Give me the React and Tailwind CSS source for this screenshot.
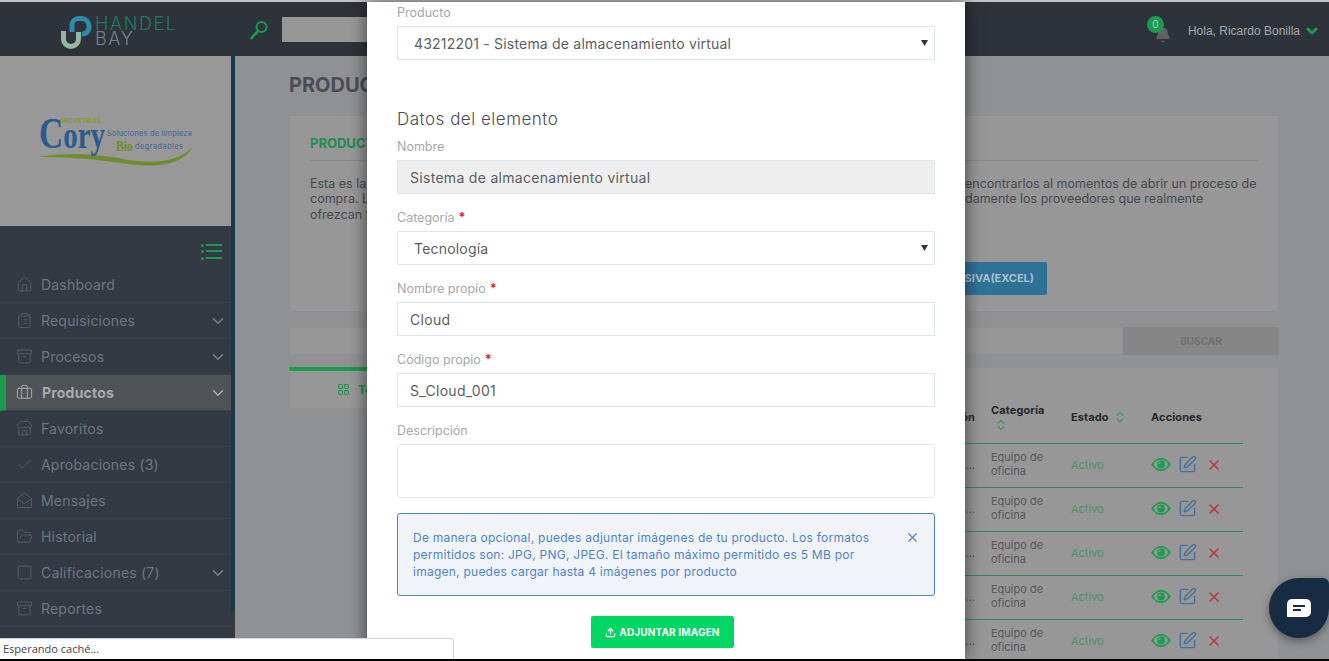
import React from 'react';
import { Home, ClipboardList, Archive, Briefcase, Store, Check, MailOpen, FolderOpen, Square, ChevronDown, ChevronsUpDown, LayoutGrid, SquarePen, X, Upload, Bell } from 'lucide-react';

const menu = [
  { label: 'Dashboard', icon: Home },
  { label: 'Requisiciones', icon: ClipboardList, arrow: true },
  { label: 'Procesos', icon: Archive, arrow: true },
  { label: 'Productos', icon: Briefcase, arrow: true, active: true },
  { label: 'Favoritos', icon: Store },
  { label: 'Aprobaciones (3)', icon: Check },
  { label: 'Mensajes', icon: MailOpen },
  { label: 'Historial', icon: FolderOpen },
  { label: 'Calificaciones (7)', icon: Square, arrow: true },
  { label: 'Reportes', icon: Archive },
];

const HandelLogo = () => (
  <svg width="118" height="44" viewBox="0 -4 118 44" className="mt-[10px] shrink-0">
    <path d="M3.5 15V23a7.5 7.5 0 0 0 15 0V16" fill="none" stroke="#93b7a5" strokeWidth="5" />
    <path d="M12 16V9a6.5 6.5 0 0 1 6.5-6.5h3a7.5 7.5 0 0 1 7.5 7.5a7 7 0 0 1-7 8" fill="none" stroke="#2b8ba8" strokeWidth="5" />
    <text x="35" y="14" fontSize="18" fontWeight="300" letterSpacing="1.6" fill="#1d7a63">HANDEL</text>
    <text x="35" y="29" fontSize="18" fontWeight="300" letterSpacing="1.6" fill="#7d8186">BAY</text>
  </svg>
);

const CoryLogo = () => (
  <svg width="157" height="60" viewBox="0 -10 157 60">
    <path d="M0 41Q40 34 90 44Q135 51 155 31Q140 55 90 48Q40 40 0 41" fill="#6d8c2c" />
    <text x="1" y="32" fontWeight="700" textLength="66" lengthAdjust="spacingAndGlyphs" fontFamily="Liberation Serif" fill="#2a5a8e">
      <tspan fontSize="44">C</tspan>
      <tspan fontSize="38">ory</tspan>
    </text>
    <text x="24" y="7" fontSize="5.5" fontWeight="700" letterSpacing="0.5" fill="#7d9a2e">INDUSTRIAS</text>
    <text x="69" y="20" fontSize="7.4" textLength="85" fill="#3f6492">Soluciones de limpieza</text>
    <text x="78" y="35" fontSize="14" fontWeight="700" textLength="17" lengthAdjust="spacingAndGlyphs" fontFamily="Liberation Serif" fill="#6d8c2c">Bio</text>
    <text x="97" y="33" fontSize="7.4" textLength="48" fill="#3f6492">degradables</text>
  </svg>
);

const Eye = () => (
  <svg width="20" height="15" viewBox="0 0 20 15">
    <path d="M0 7.5Q10 -6 20 7.5Q10 21 0 7.5Z" fill="#1f9d53" />
    <ellipse cx="10" cy="7.5" rx="7" ry="4.6" fill="#979797" />
    <circle cx="10" cy="7.5" r="3.9" fill="#1f9d53" />
    <circle cx="8.6" cy="6" r="1.1" fill="#979797" />
  </svg>
);

const Field = ({ label, required, children, className }) => (
  <div className={className}>
    <div className="h-[20px] text-[12.5px] leading-[20px] text-[#a5a8ad]">
      {label}
      {required && <span className="ml-1 font-bold text-[#ee1c25]">*</span>}
    </div>
    <div className="mt-[3px]">{children}</div>
  </div>
);

const Input = ({ children, muted }) => (
  <div className={`h-[34px] border border-[#dde6ee] px-3 text-[14px] leading-[34px] tracking-[0.3px] text-[#5a5e63] ${muted ? 'bg-[#eeeeee]' : 'bg-white'}`}>
    {children}
  </div>
);

const Select = ({ children }) => (
  <div className="flex h-[34px] items-center justify-between border border-[#dde6ee] bg-white pl-4 pr-[6px] text-[14px] tracking-[0.2px] text-[#5a5e63]">
    <span>{children}</span>
    <svg width="7" height="6" viewBox="0 0 7 6"><path d="M0 0h7L3.5 6z" fill="#333" /></svg>
  </div>
);

const Row = () => (
  <div className="flex h-[44px] items-center border-b border-[#2f8a58]">
    <div className="flex-1 pr-[16px] text-right text-[11px] text-[#55585c]">...</div>
    <div className="w-[80px] pb-[3px] text-[11px] leading-[14px] text-[#55585c]">Equipo de<br />oficina</div>
    <div className="w-[80px] text-[11px] text-[#52925f]">Activo</div>
    <div className="flex w-[92px] items-center gap-[7px] pb-[2px]">
      <Eye />
      <SquarePen size={19} strokeWidth={1.8} className="text-[#4a7099]" />
      <X size={16} strokeWidth={2.4} className="ml-[2px] text-[#b8393c]" />
    </div>
  </div>
);

export default function App() {
  return (
    <div className="relative flex h-[661px] w-[1329px] flex-col overflow-hidden bg-[#8f9193] font-['Inter',sans-serif]">
      <div className="h-[2px] shrink-0 bg-[#c4c4c4]" />

      {/* Header */}
      <header className="flex h-[54px] shrink-0 items-center bg-[#2e333b]">
        <div className="ml-[60px]"><HandelLogo /></div>
        <svg width="18" height="20" viewBox="0 0 18 20" className="ml-[72px] mt-[2px] shrink-0">
          <circle cx="11.5" cy="7" r="5" fill="none" stroke="#1b9a50" strokeWidth="2" />
          <path d="M8 11L1.5 18" stroke="#1b9a50" strokeWidth="2.6" strokeLinecap="round" />
        </svg>
        <div className="ml-[14px] h-[25px] w-[300px] bg-[#979797]" />
        <div className="ml-auto flex items-center pr-[9px] pt-[3px]">
          <div className="relative mr-[21px] mt-[-3px] h-[24px] w-[20px]">
            <Bell size={16} fill="#5f6266" className="absolute bottom-[-2px] right-[-4px] text-[#5f6266]" />
            <div className="absolute left-0 top-[-1px] flex h-[17px] w-[17px] items-center justify-center rounded-full bg-[#1b9a50] text-[10px] text-[#a9d5bb]">0</div>
          </div>
          <span className="font-['Liberation_Sans',sans-serif] text-[12px] text-[#a6a8ab]">Hola, Ricardo Bonilla</span>
          <ChevronDown size={16} strokeWidth={4.5} className="ml-[4px] text-[#1b9a50]" />
        </div>
      </header>

      <div className="flex min-h-0 flex-1">
        {/* Sidebar */}
        <aside className="flex w-[235px] shrink-0 bg-[#343a43]">
          <div className="w-[231px]">
            <div className="flex h-[170px] items-center justify-center bg-[#989898] pb-[10px] pl-[2px]"><CoryLogo /></div>
            <div className="flex h-[41px] items-center justify-end pr-[9px] pt-[10px]">
              <svg width="21" height="17" viewBox="0 0 21 17" fill="#1b9a50">
                <rect x="0" y="1" width="3" height="3" rx="1.5" /><rect x="5" y="1" width="16" height="2" />
                <rect x="0" y="7" width="3" height="3" rx="1.5" /><rect x="5" y="7" width="16" height="2" />
                <rect x="0" y="14" width="3" height="3" rx="1.5" /><rect x="5" y="14" width="16" height="2" />
              </svg>
            </div>
            <nav>
              {menu.map(({ label, icon: Icon, arrow, active }) => (
                <div
                  key={label}
                  className={`flex h-[36px] items-center border-b border-[#3a4049] pr-[4px] text-[14px] tracking-[0.2px] ${active ? 'border-l-[6px] border-l-[#1b9a50] bg-[#505356] pl-[10px] font-bold text-[#a9abad]' : 'pl-[16px] text-[#6f7680]'}`}
                >
                  <Icon size={17} strokeWidth={1.4} className={active ? 'text-[#a9abad]' : 'text-[#555c66]'} />
                  <span className={active ? 'ml-[9px]' : 'ml-[8px]'}>{label}</span>
                  {arrow && <ChevronDown size={18} strokeWidth={2} className={`ml-auto ${active ? 'text-[#a9abad]' : 'text-[#7a808a]'}`} />}
                </div>
              ))}
            </nav>
          </div>
          <div className="h-[555px] w-[4px] bg-[#15394d]" />
        </aside>

        {/* Page behind the modal */}
        <main className="min-w-0 flex-1 pl-[54px] pr-[50px]">
          <h1 className="mt-[16px] h-[26px] text-[20px] font-bold leading-[26px] text-[#4b4d55]">PRODUCTOS</h1>
          <section className="mt-[17px] h-[197px] border border-[#8a9096] bg-[#979797] px-[20px] pt-[18px]">
            <h2 className="border-b border-[#82878d] pb-[6px] text-[13px] font-bold text-[#1d8c4e]">PRODUCTOS</h2>
            <div className="mt-[15px] flex justify-between text-[12.5px] leading-[15.5px] text-[#46494e]">
              <div>
                <p>Esta es la</p>
                <p>compra. L</p>
                <p>ofrezcan t</p>
              </div>
              <div className="w-[293px]">
                <p className="whitespace-nowrap">encontrarlos al momentos de abrir un proceso de</p>
                <p className="whitespace-nowrap">damente los proveedores que realmente</p>
              </div>
            </div>
            <div className="mt-[40px] flex justify-end pr-[211px]">
              <div className="flex h-[33px] w-[100px] items-center justify-end rounded-[2px] bg-[#2f7298] pr-[13px] text-[11px] font-bold text-[#a9c0cf]">MASIVA(EXCEL)</div>
            </div>
          </section>

          <div className="mt-[15px] flex h-[28px]">
            <div className="flex-1 border border-[#8a9096] bg-[#979797]" />
            <div className="flex w-[156px] items-center justify-center rounded-[2px] bg-[#868686] text-[10px] font-bold text-[#707070]">BUSCAR</div>
          </div>

          <div className="mt-[12px] flex items-start gap-[12px]">
            <div className="flex h-[42px] w-[220px] items-center border-x border-b border-t-[4px] border-[#8a9096] border-t-[#1b9a50] bg-[#979797] pl-[47px] text-[12px] font-bold text-[#1d8c4e]">
              <LayoutGrid size={13} strokeWidth={1.8} />
              <span className="ml-[8px]">Todos</span>
            </div>
            <section className="h-[300px] flex-1 border border-[#8a9096] bg-[#979797] pr-[35px]">
              <div className="flex h-[76px] items-center border-b border-[#2f8a58] pt-[23px] text-[11px] font-bold tracking-[0.1px] text-[#26282c]">
                <div className="flex-1 pr-[16px] text-right">Descripción</div>
                <div className="w-[80px] leading-[14px]">
                  Categoría
                  <ChevronsUpDown size={14} className="ml-[3px] mt-[1px] text-[#2f9a5c]" />
                </div>
                <div className="flex w-[80px] items-center gap-[4px]">Estado<ChevronsUpDown size={14} className="text-[#2f9a5c]" /></div>
                <div className="w-[92px]">Acciones</div>
              </div>
              <Row /><Row /><Row /><Row /><Row />
            </section>
          </div>
        </main>
      </div>

      <div className="h-[2px] shrink-0 bg-black" />

      {/* Modal */}
      <div className="absolute bottom-[2px] left-[367px] top-[2px] w-[598px] overflow-hidden bg-white px-[30px] shadow-[0_0_16px_rgba(0,0,0,0.6)]">
        <Field label="Producto" className="mt-[1px]">
          <Select>43212201 - Sistema de almacenamiento virtual</Select>
        </Field>
        <h3 className="mt-[47px] h-[24px] text-[17px] font-light leading-[24px] tracking-[0.5px] text-[#4a4d52]">Datos del elemento</h3>
        <Field label="Nombre" className="mt-[6px]">
          <Input muted>Sistema de almacenamiento virtual</Input>
        </Field>
        <Field label="Categoría" required className="mt-[14px]">
          <Select>Tecnología</Select>
        </Field>
        <Field label="Nombre propio" required className="mt-[14px]">
          <Input>Cloud</Input>
        </Field>
        <Field label="Código propio" required className="mt-[14px]">
          <Input>S_Cloud_001</Input>
        </Field>
        <Field label="Descripción" className="mt-[14px]">
          <div className="h-[54px] rounded-[3px] border border-[#e3e7ea] bg-white" />
        </Field>
        <div className="mt-[15px] flex h-[83px] items-start justify-between rounded-[3px] border border-[#4a86c8] bg-[#f0f4f8] pl-[15px] pr-[14px] pt-[15px] text-[12px] leading-[17px] tracking-[0.25px] text-[#4f84cc]">
          <p>De manera opcional, puedes adjuntar imágenes de tu producto. Los formatos<br />permitidos son: JPG, PNG, JPEG. El tamaño máximo permitido es 5 MB por<br />imagen, puedes cargar hasta 4 imágenes por producto</p>
          <X size={15} strokeWidth={1.7} className="mt-[1px]" />
        </div>
        <div className="mt-[20px] flex justify-center pr-[7px]">
          <div className="flex h-[32px] w-[143px] items-center justify-center gap-[3px] rounded-[2px] bg-[#00d664] text-[10px] font-bold tracking-[0.15px] text-white">
            <Upload size={11} strokeWidth={3} />
            ADJUNTAR IMAGEN
          </div>
        </div>
      </div>

      {/* Browser status bubble */}
      <div className="absolute bottom-[2px] left-0 flex h-[21px] w-[454px] items-center rounded-tr-[3px] border-r border-t border-[#d4d4d4] bg-white pl-[3px] font-['Open_Sans',sans-serif] text-[11px] text-[#444]">
        Esperando caché...
      </div>

      {/* Chat launcher */}
      <div className="absolute left-[1269px] top-[578px] flex h-[60px] w-[60px] items-center justify-center rounded-[30px] rounded-tr-[6px] bg-[#172b42] shadow-[0_3px_8px_rgba(0,0,0,0.4)]">
        <svg width="24" height="18" viewBox="0 0 24 18">
          <path d="M5 0h14a5 5 0 0 1 5 5v8a5 5 0 0 1-5 5H0V5a5 5 0 0 1 5-5z" fill="#fff" />
          <rect x="6" y="6" width="12" height="2" fill="#172b42" />
          <rect x="6" y="10" width="8" height="2" fill="#172b42" />
        </svg>
      </div>
    </div>
  );
}
